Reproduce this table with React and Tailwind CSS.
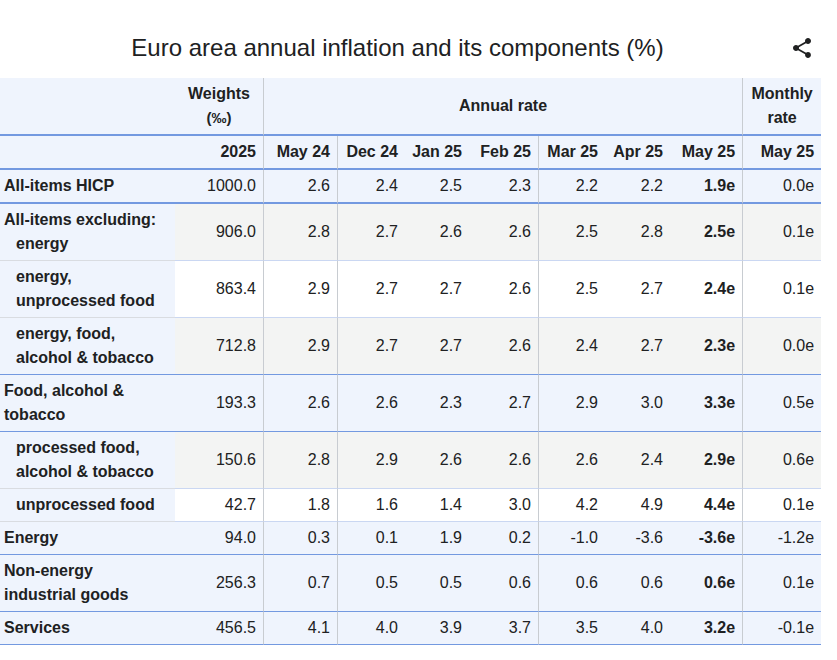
import React from 'react';

const rows = [
  { label: <>All-items HICP</>, kind: 'main', line: 'blue2', w: '1000.0', v: ['2.6', '2.4', '2.5', '2.3', '2.2', '2.2'], may: '1.9e', m: '0.0e' },
  { label: <>All-items excluding:<div className="pl-3">energy</div></>, kind: 'gray', line: 'light', w: '906.0', v: ['2.8', '2.7', '2.6', '2.6', '2.5', '2.8'], may: '2.5e', m: '0.1e' },
  { label: <div className="pl-3">energy,<br />unprocessed food</div>, kind: 'white', line: 'light', w: '863.4', v: ['2.9', '2.7', '2.7', '2.6', '2.5', '2.7'], may: '2.4e', m: '0.1e' },
  { label: <div className="pl-3">energy, food,<br />alcohol &amp; tobacco</div>, kind: 'gray', line: 'blue', w: '712.8', v: ['2.9', '2.7', '2.7', '2.6', '2.4', '2.7'], may: '2.3e', m: '0.0e' },
  { label: <>Food, alcohol &amp;<br />tobacco</>, kind: 'main', line: 'blue', w: '193.3', v: ['2.6', '2.6', '2.3', '2.7', '2.9', '3.0'], may: '3.3e', m: '0.5e' },
  { label: <div className="pl-3">processed food,<br />alcohol &amp; tobacco</div>, kind: 'gray', line: 'light', w: '150.6', v: ['2.8', '2.9', '2.6', '2.6', '2.6', '2.4'], may: '2.9e', m: '0.6e' },
  { label: <div className="pl-3">unprocessed food</div>, kind: 'white', line: 'light', w: '42.7', v: ['1.8', '1.6', '1.4', '3.0', '4.2', '4.9'], may: '4.4e', m: '0.1e' },
  { label: <>Energy</>, kind: 'main', line: 'blue', w: '94.0', v: ['0.3', '0.1', '1.9', '0.2', '-1.0', '-3.6'], may: '-3.6e', m: '-1.2e' },
  { label: <>Non-energy<br />industrial goods</>, kind: 'main', line: 'blue', w: '256.3', v: ['0.7', '0.5', '0.5', '0.6', '0.6', '0.6'], may: '0.6e', m: '0.1e' },
  { label: <>Services</>, kind: 'main', line: 'blue', w: '456.5', v: ['4.1', '4.0', '3.9', '3.7', '3.5', '4.0'], may: '3.2e', m: '-0.1e' },
];

const months = ['May 24', 'Dec 24', 'Jan 25', 'Feb 25', 'Mar 25', 'Apr 25', 'May 25'];
// columns that carry a vertical rule on their right edge
const ruled = [0, 3, 6];

const lineData = {
  blue2: 'border-b-2 border-b-[#7399e0]',
  blue: 'border-b border-b-[#7399e0]',
  light: 'border-b border-b-[#cad7f2]',
};
const lineLabel = {
  blue2: 'border-b-2 border-b-[#7399e0]',
  blue: 'border-b border-b-[#7399e0]',
  light: 'border-b border-b-[#d9dce1]',
};

const dataBg = { main: 'bg-[#eff4fd]', gray: 'bg-[#f3f4f3]', white: 'bg-white' };

const ShareIcon = () => (
  <svg width="24" height="24" viewBox="0 0 24 24" fill="#202122" className="mt-[36px]">
    <path d="M18 16.08c-.76 0-1.44.3-1.96.77L8.91 12.7c.05-.23.09-.46.09-.7s-.04-.47-.09-.7l7.05-4.11c.54.5 1.25.81 2.04.81 1.66 0 3-1.34 3-3s-1.34-3-3-3-3 1.34-3 3c0 .24.04.47.09.7L8.04 9.81C7.5 9.31 6.79 9 6 9c-1.66 0-3 1.34-3 3s1.34 3 3 3c.79 0 1.5-.31 2.04-.81l7.12 4.16c-.05.21-.08.43-.08.65 0 1.61 1.31 2.92 2.92 2.92 1.61 0 2.92-1.31 2.92-2.92s-1.31-2.92-2.92-2.92z" />
  </svg>
);

const App = () => {
  return (
    <div className="w-[837px] h-[660px] bg-white text-[#202122] font-['Liberation_Sans',Arial,sans-serif] overflow-hidden">
      <div className="h-[78px] flex items-start pr-[23px]">
        <h1 className="flex-1 text-center text-[24px] leading-[30px] pl-[5px] mt-[33px]">
          Euro area annual inflation and its components (%)
        </h1>
        <ShareIcon />
      </div>

      <table className="w-[821px] table-fixed border-separate border-spacing-0 text-[16px] leading-6">
        <colgroup>
          <col className="w-[175px]" />
          <col className="w-[89px]" />
          <col className="w-[74px]" />
          <col className="w-[67px]" />
          <col className="w-[64px]" />
          <col className="w-[70px]" />
          <col className="w-[66px]" />
          <col className="w-[65px]" />
          <col className="w-[73px]" />
          <col className="w-[78px]" />
        </colgroup>
        <thead>
          <tr className="bg-[#eff4fd]">
            <th className="py-1 border-b-2 border-b-[#7399e0]"></th>
            <th className="py-1 font-bold text-center border-b-2 border-b-[#7399e0] border-r border-r-[#c8ccd1]">
              Weights<br /><span className="text-[15px]">(‰)</span>
            </th>
            <th colSpan={7} className="py-1 font-bold text-center border-b-2 border-b-[#7399e0] border-r border-r-[#c8ccd1]">
              Annual rate
            </th>
            <th className="py-1 font-bold text-center border-b-2 border-b-[#7399e0]">
              Monthly<br />rate
            </th>
          </tr>
          <tr className="bg-[#eff4fd]">
            <th className="py-1 border-b-2 border-b-[#7399e0]"></th>
            <th className="py-1 pr-[7px] text-right font-bold border-b-2 border-b-[#7399e0] border-r border-r-[#c8ccd1]">2025</th>
            {months.map((mo, i) => (
              <th
                key={mo}
                className={`py-1 pr-[7px] text-right font-bold whitespace-nowrap border-b-2 border-b-[#7399e0] ${ruled.includes(i) ? 'border-r border-r-[#c8ccd1]' : ''}`}
              >
                {mo}
              </th>
            ))}
            <th className="py-1 pr-[7px] text-right font-bold whitespace-nowrap border-b-2 border-b-[#7399e0]">May 25</th>
          </tr>
        </thead>
        <tbody>
          {rows.map((r, idx) => {
            const cell = `py-1 pr-[7px] text-right align-middle whitespace-nowrap ${dataBg[r.kind]} ${lineData[r.line]}`;
            return (
              <tr key={idx}>
                <td className={`py-1 pl-1 font-bold align-middle bg-[#eff4fd] ${lineLabel[r.line]}`}>{r.label}</td>
                <td className={`${cell} border-r border-r-[#c8ccd1]`}>{r.w}</td>
                {r.v.map((x, i) => (
                  <td key={i} className={`${cell} ${ruled.includes(i) ? 'border-r border-r-[#c8ccd1]' : ''}`}>{x}</td>
                ))}
                <td className={`${cell} font-bold border-r border-r-[#c8ccd1]`}>{r.may}</td>
                <td className={cell}>{r.m}</td>
              </tr>
            );
          })}
        </tbody>
      </table>
    </div>
  );
};

export default App;
